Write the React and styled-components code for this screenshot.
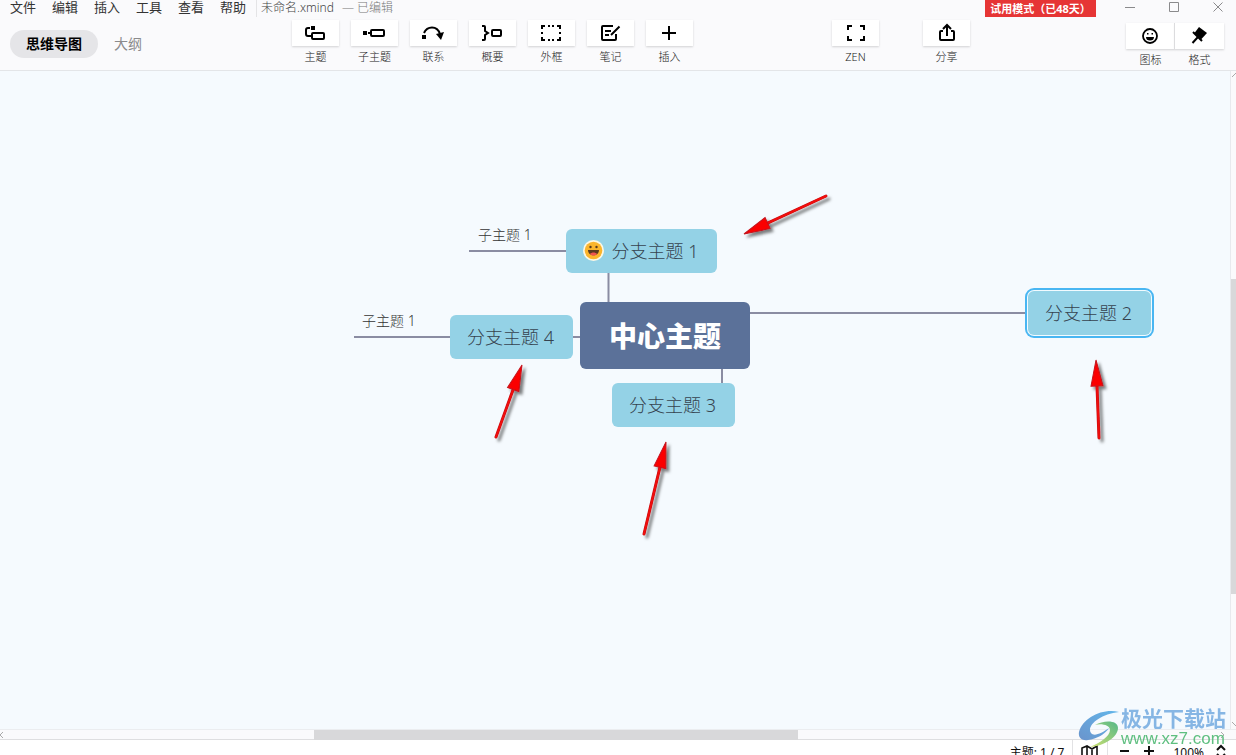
import React from "react";
import styled, { createGlobalStyle, css } from "styled-components";

const GlobalStyle = createGlobalStyle`
  * { box-sizing: border-box; }
  body { margin: 0; }
  button { border: 0; padding: 0; background: none; font: inherit; color: inherit; }
`;

const Window = styled.div`
  display: flex;
  flex-direction: column;
  height: 100vh;
  overflow: hidden;
  background: #fff;
  color: #333;
  font-family: "Noto Sans", "Noto Sans CJK SC", sans-serif;
`;

const Header = styled.header`
  display: flex;
  flex-direction: column;
  gap: 3px;
  height: 71px;
  flex: none;
  background: #fafafc;
  border-bottom: 1px solid #e3e5e8;
`;

const TitleBar = styled.div`
  display: flex;
  align-items: center;
  height: 17px;
  padding-left: 10px;
`;

const MenuBar = styled.nav`
  display: flex;
  gap: 16px;
  padding-right: 10px;
  border-right: 1px solid #e4e4e6;
`;

const MenuItem = styled.button`
  font-size: 13px;
  line-height: 14px;
  height: 17px;
  padding-bottom: 3px;
`;

const DocTitle = styled.div`
  display: flex;
  gap: 8px;
  height: 17px;
  padding-left: 4px;
  font-size: 12px;
  line-height: 16px;
  font-weight: 300;
  color: #444;
`;

const DocState = styled.span`
  color: #777;
`;

const TrialBadge = styled.div`
  margin-left: auto;
  margin-right: 16px;
  width: 111px;
  height: 17px;
  flex: none;
  background: #e63535;
  color: #fff;
  font-size: 11px;
  font-weight: 700;
  line-height: 17px;
  text-align: center;
  white-space: nowrap;
`;

const WindowButtons = styled.div`
  display: flex;
  gap: 8px;
`;

const WindowButton = styled.button`
  display: flex;
  justify-content: center;
  width: 36px;
  height: 17px;
  color: #8a8a8c;
`;

const Toolbar = styled.div`
  display: flex;
  align-items: flex-start;
  height: 50px;
  padding-right: 12px;
`;

const Tabs = styled.div`
  display: flex;
  align-items: center;
  width: 292px;
  height: 48px;
  padding-left: 10px;
  flex: none;
`;

const Tab = styled.button`
  height: 28px;
  padding: 0 16px;
  border-radius: 14px;
  font-size: 14px;
  line-height: 28px;
  color: #8a8a8c;
  ${(p) =>
    p.$active &&
    css`
      background: #e5e5e8;
      color: #000;
      font-weight: 700;
    `}
`;

const Tools = styled.div`
  display: flex;
  gap: ${(p) => p.$gap}px;
  margin-left: ${(p) => p.$before || 0}px;
`;

const Tool = styled.button`
  display: flex;
  flex-direction: column;
  align-items: center;
  gap: 4px;
  width: ${(p) => p.$width || 47}px;
  font-size: 11px;
  line-height: 14px;
  font-weight: 300;
  color: #222;
`;

const ToolFace = styled.span`
  display: flex;
  align-items: center;
  justify-content: center;
  width: 100%;
  height: 26px;
  background: #fff;
  color: #000;
  box-shadow: 0 1px 2px rgba(0, 0, 0, 0.16);
`;

const PanelTools = styled.div`
  display: flex;
  margin: 3px 0 0 auto;

  ${Tool} + ${Tool} ${ToolFace} {
    box-shadow: -1px 0 0 #dcdcde, 0 1px 2px rgba(0, 0, 0, 0.16);
  }
`;

const Workspace = styled.main`
  display: flex;
  flex: 1;
  min-height: 0;
`;

const Canvas = styled.section`
  position: relative;
  flex: 1;
  overflow: hidden;
  background: #f5fafe;
`;

const Drawing = styled.svg`
  position: absolute;
  left: 0;
  top: 0;
  width: 100%;
  height: 100%;
`;

const Topic = styled.div`
  position: absolute;
  left: ${(p) => p.$x}px;
  top: ${(p) => p.$y}px;
  display: flex;
  align-items: center;
  justify-content: center;
  gap: 8px;
  width: ${(p) => p.$w || 123}px;
  height: 44px;
  padding: 0 2px 2px 0;
  border-radius: 6px;
  background: #94d2e6;
  color: #36434f;
  font-size: 18px;
  font-weight: 300;
  white-space: nowrap;
  ${(p) =>
    p.$selected &&
    css`
      box-shadow: 0 0 0 1px #f2fbff, 0 0 0 3px #49b6f2;
    `}
`;

const CentralTopic = styled(Topic)`
  height: 67px;
  padding: 0 0 2px;
  background: #5b7199;
  color: #fff;
  font-size: 28px;
  font-weight: 900;
`;

const SubTopic = styled.div`
  position: absolute;
  left: ${(p) => p.$x}px;
  top: ${(p) => p.$y}px;
  font-size: 14px;
  line-height: 20px;
  font-weight: 300;
  white-space: nowrap;
`;

const VScroll = styled.div`
  display: flex;
  flex-direction: column;
  width: 6px;
  flex: none;
  color: #aaa;
  background: #fafafc;
  border-left: 1px solid #e8eaee;
`;

const VThumb = styled.div`
  height: 315px;
  margin: 200px 0 auto;
  background: #d8d8da;
`;

const HScroll = styled.div`
  display: flex;
  align-items: center;
  height: 11px;
  flex: none;
  padding-right: 10px;
  color: #aaa;
  background: #fafafc;
  border-top: 1px solid #ebedf0;
  border-bottom: 1px solid #dedee0;
`;

const HThumb = styled.div`
  width: 484px;
  height: 10px;
  margin: 0 auto 0 308px;
  background: #d8d8da;
`;

const Footer = styled.footer`
  height: 15px;
  flex: none;
  overflow: hidden;
`;

const StatusBar = styled.div`
  display: flex;
  align-items: center;
  justify-content: flex-end;
  height: 24px;
  padding-right: 9px;
  font-size: 12px;
  color: #111;
`;

const StatusCell = styled.div`
  display: flex;
  align-items: center;
  height: 24px;
  padding: 0 8px;
  border-right: 1px solid #e2e2e4;
`;

const ZoomControls = styled.div`
  display: flex;
  align-items: center;
  gap: 12px;
  padding-left: 11px;
`;

const ZoomLevel = styled.button`
  display: flex;
  align-items: center;
  gap: 11px;
  margin-left: 6px;
`;

const Watermark = styled.div`
  position: fixed;
  right: 10px;
  bottom: 7px;
  display: flex;
  align-items: flex-end;
  gap: 1px;
`;

const WatermarkText = styled.div`
  display: flex;
  flex-direction: column;
`;

const SiteName = styled.span`
  font-size: 21px;
  line-height: 24px;
  font-weight: 700;
  color: #86b6e4;
`;

const SiteUrl = styled.span`
  font-family: "Liberation Sans", sans-serif;
  font-size: 17px;
  line-height: 18px;
  color: #5fbf80;
`;

const Icon = ({ children }) => (
  <svg width="23" height="24" viewBox="0 0 23 24" fill="none" stroke="currentColor" strokeWidth="2" aria-hidden="true">
    {children}
  </svg>
);

const icons = {
  topic: (
    <>
      <path d="M6 7H4a2 2 0 0 0-2 2v4a2 2 0 0 0 2 2h3" />
      <path d="M7 5h4v4H7z" fill="currentColor" stroke="none" />
      <rect x="8" y="12" width="12" height="6" rx="1" />
    </>
  ),
  subtopic: (
    <>
      <path d="M0 10h4v4H0z" fill="currentColor" stroke="none" />
      <path d="M5 12h3" />
      <rect x="8" y="9" width="13" height="6" rx="1" />
    </>
  ),
  relation: (
    <>
      <path d="M0 14h4v4H0z" fill="currentColor" stroke="none" />
      <path d="M2 12C5 5 15 4 18 13" />
      <path d="M14 13l8-2-3 8z" fill="currentColor" stroke="none" />
    </>
  ),
  summary: (
    <>
      <path d="M1 5h2a1 1 0 0 1 1 1v4l3 2-3 2v4a1 1 0 0 1-1 1H1" />
      <rect x="11" y="9" width="9" height="6" rx="1" />
    </>
  ),
  boundary: (
    <path d="M2 8V5h3M8 5h2M12 5h2M17 5h3v3M20 11v2M20 16v3h-3M14 19h-2M10 19H8M5 19H2v-3M2 13v-2" />
  ),
  note: (
    <>
      <path d="M14 5H4a1 1 0 0 0-1 1v12a1 1 0 0 0 1 1h12a1 1 0 0 0 1-1v-5" />
      <path d="M6 10h6M6 14h4M12 14l8.500-8.500" />
    </>
  ),
  insert: <path d="M11 5v14M4 12h14" />,
  zen: <path d="M4 9V5h4M16 5h4v4M20 15v4h-4M8 19H4v-4" />,
  share: (
    <>
      <path d="M8 10H6a1 1 0 0 0-1 1v7a1 1 0 0 0 1 1h12a1 1 0 0 0 1-1v-7a1 1 0 0 0-1-1h-2" />
      <path d="M12 15V5M8 8l4-4 4 4" />
    </>
  ),
  marker: (
    <>
      <circle cx="11" cy="12" r="7" strokeWidth="1.800" />
      <path d="M7 13h8a4 3.500 0 0 1-8 0z" fill="currentColor" stroke="none" />
      <path d="M8 9h1.500v1.500H8zM12.500 9H14v1.500h-1.500z" fill="currentColor" stroke="none" />
    </>
  ),
  format: (
    <>
      <path d="M11 3l8 6-6 6.500L6.500 9z" fill="currentColor" stroke="none" />
      <path d="M5 8l9 9M4.500 19l5-5.500" />
    </>
  ),
};

const mainTools = [
  ["topic", "主题"],
  ["subtopic", "子主题"],
  ["relation", "联系"],
  ["summary", "概要"],
  ["boundary", "外框"],
  ["note", "笔记"],
  ["insert", "插入"],
];

const ToolButton = ({ icon, label, width }) => (
  <Tool type="button" $width={width}>
    <ToolFace>
      <Icon>{icons[icon]}</Icon>
    </ToolFace>
    {label}
  </Tool>
);

const Arrow = ({ from, to }) => {
  const dx = to[0] - from[0];
  const dy = to[1] - from[1];
  const length = Math.hypot(dx, dy);
  const angle = (Math.atan2(dy, dx) * 180) / Math.PI;
  return (
    <g filter="url(#arrow-shadow)">
      <g transform={`translate(${from[0]} ${from[1]}) rotate(${angle})`}>
        <path d={`M0 0H${length - 20}`} stroke="#c4141c" strokeWidth="3" strokeLinecap="round" />
        <path d={`M0 0H${length - 20}`} stroke="#f00808" strokeWidth="2" strokeLinecap="round" />
        <path
          d={`M${length} 0l-26 6v-12z`}
          fill="#fb0000"
          stroke="#c4141c"
          strokeWidth="1"
        />
      </g>
    </g>
  );
};

const Grin = () => (
  <svg width="21" height="21" viewBox="0 0 21 21" aria-label="笑脸">
    <circle cx="10.500" cy="10.500" r="10.500" fill="#fdf8e4" />
    <circle cx="10.500" cy="10.500" r="8.800" fill="#fbb52c" />
    <circle cx="7.500" cy="7" r="1.200" fill="#5b3a1e" />
    <circle cx="13.500" cy="7" r="1.200" fill="#5b3a1e" />
    <path d="M5 10h11c0 7-11 7-11 0z" fill="#5b3a1e" />
    <path d="M7 14c1.500-2 5.500-2 7 0-2 2-5 2-7 0z" fill="#f0544f" />
  </svg>
);

export default function App() {
  return (
    <Window>
      <GlobalStyle />
      <Header>
        <TitleBar>
          <MenuBar>
            {["文件", "编辑", "插入", "工具", "查看", "帮助"].map((name) => (
              <MenuItem type="button" key={name}>{name}</MenuItem>
            ))}
          </MenuBar>
          <DocTitle>
            <span>未命名.xmind</span>
            <DocState>— 已编辑</DocState>
          </DocTitle>
          <TrialBadge>试用模式（已48天）</TrialBadge>
          <WindowButtons>
            <WindowButton type="button" aria-label="最小化">
              <svg width="12" height="14" fill="none" stroke="currentColor"><path d="M1 7.500h10" /></svg>
            </WindowButton>
            <WindowButton type="button" aria-label="最大化">
              <svg width="12" height="14" fill="none" stroke="currentColor"><path d="M1.500 2.500h9v9h-9z" /></svg>
            </WindowButton>
            <WindowButton type="button" aria-label="关闭">
              <svg width="12" height="14" fill="none" stroke="currentColor"><path d="M1.500 2.500l9 9M10.500 2.500l-9 9" /></svg>
            </WindowButton>
          </WindowButtons>
        </TitleBar>
        <Toolbar>
          <Tabs>
            <Tab type="button" $active>思维导图</Tab>
            <Tab type="button">大纲</Tab>
          </Tabs>
          <Tools $gap={12}>
            {mainTools.map(([icon, label]) => (
              <ToolButton key={icon} icon={icon} label={label} />
            ))}
          </Tools>
          <Tools $gap={44} $before={139}>
            <ToolButton icon="zen" label="ZEN" />
            <ToolButton icon="share" label="分享" />
          </Tools>
          <PanelTools>
            <ToolButton icon="marker" label="图标" width={49} />
            <ToolButton icon="format" label="格式" width={49} />
          </PanelTools>
        </Toolbar>
      </Header>

      <Workspace>
        <Canvas>
          <Drawing fill="none">
            <defs>
              <filter id="arrow-shadow" x="-50%" y="-50%" width="200%" height="200%">
                <feDropShadow dx="3" dy="3" stdDeviation="1.500" floodColor="#000" floodOpacity="0.5" />
              </filter>
            </defs>
            <path
              d="M469 180h98M354 266h97M572 266h10M608.500 201v31M722 297v16M749 242h279"
              stroke="#8a8ca2"
              strokeWidth="2"
            />
          </Drawing>
          <Topic $x={566} $y={158} $w={151}>
            <Grin />
            分支主题 1
          </Topic>
          <Topic $x={1028} $y={220} $selected>分支主题 2</Topic>
          <Topic $x={612} $y={312}>分支主题 3</Topic>
          <Topic $x={450} $y={244}>分支主题 4</Topic>
          <CentralTopic $x={580} $y={231} $w={170}>中心主题</CentralTopic>
          <SubTopic $x={478} $y={154}>子主题 1</SubTopic>
          <SubTopic $x={362} $y={240}>子主题 1</SubTopic>
          <Drawing fill="none">
            <Arrow from={[826, 125]} to={[744, 163]} />
            <Arrow from={[496, 366]} to={[522, 294]} />
            <Arrow from={[644, 463]} to={[666, 371]} />
            <Arrow from={[1099, 367]} to={[1096, 289]} />
          </Drawing>
        </Canvas>
        <VScroll>
          <svg width="6" height="8" fill="none" stroke="currentColor"><path d="M1 6l4-4 4 4" /></svg>
          <VThumb />
          <svg width="6" height="8" fill="none" stroke="currentColor"><path d="M1 1l4 4 4-4" /></svg>
        </VScroll>
      </Workspace>

      <HScroll>
        <svg width="6" height="8" fill="none" stroke="currentColor"><path d="M3 1L0 4l3 3" /></svg>
        <HThumb />
        <svg width="6" height="8" fill="none" stroke="currentColor"><path d="M1 1l3 3-3 3" /></svg>
      </HScroll>

      <Footer>
        <StatusBar>
          <StatusCell>主题: 1 / 7</StatusCell>
          <StatusCell>
            <svg width="18" height="16" viewBox="0 0 18 16" fill="none" stroke="currentColor" strokeWidth="1.600">
              <path d="M1 14V4l5-2 5 3 5-3v11l-5 2-5-3-5 2M6 2v11M11 5v10" />
            </svg>
          </StatusCell>
          <ZoomControls>
            <button type="button" aria-label="缩小">
              <svg width="12" height="12" stroke="currentColor" strokeWidth="2"><path d="M1 6h9" /></svg>
            </button>
            <button type="button" aria-label="放大">
              <svg width="12" height="12" stroke="currentColor" strokeWidth="2"><path d="M1 6h10M6 1v10" /></svg>
            </button>
            <ZoomLevel type="button">
              100%
              <svg width="12" height="16" fill="none" stroke="currentColor" strokeWidth="2"><path d="M2 6l4-4 4 4M2 10l4 4 4-4" /></svg>
            </ZoomLevel>
          </ZoomControls>
        </StatusBar>
      </Footer>

      <Watermark>
        <svg width="42" height="38" viewBox="0 0 42 38" aria-hidden="true">
          <defs>
            <linearGradient id="swirl" x1="1" y1="0" x2="0" y2="1">
              <stop offset="0" stopColor="#62b6ea" />
              <stop offset="1" stopColor="#6a94cc" />
            </linearGradient>
            <linearGradient id="leaf" x1="0" y1="1" x2="1" y2="0">
              <stop offset="0" stopColor="#cfe070" />
              <stop offset="1" stopColor="#55b888" />
            </linearGradient>
          </defs>
          <path d="M41 2C24-2 5 8 1 22c-1 6 3 9 9 8 9-1 17-6 21-12-7 5-15 9-18 5C8 16 22 4 41 2z" fill="url(#swirl)" />
          <path d="M17 15c9-5 23-5 23 3 0 9-14 18-28 19 10-4 20-11 20-17 0-5-9-7-15-5z" fill="url(#leaf)" />
        </svg>
        <WatermarkText>
          <SiteName>极光下载站</SiteName>
          <SiteUrl>www.xz7.com</SiteUrl>
        </WatermarkText>
      </Watermark>
    </Window>
  );
}
